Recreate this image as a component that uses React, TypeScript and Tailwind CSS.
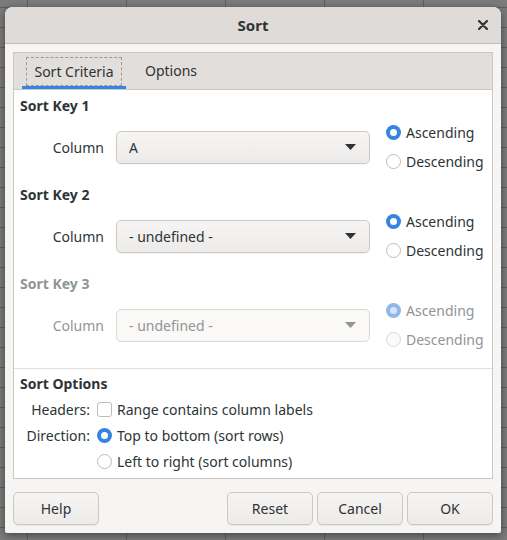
import React from 'react';

const ink = 'text-[#2e3436]';

function Radio({ checked, disabled }: { checked?: boolean; disabled?: boolean }) {
  if (checked) {
    return (
      <span
        className={`w-[15px] h-[15px] rounded-full shrink-0 flex items-center justify-center ${
          disabled ? 'bg-[#8fb7ec]' : 'bg-[#3584e4]'
        }`}
      >
        <span className={`w-[7px] h-[7px] rounded-full ${disabled ? 'bg-[#d6e5f8]' : 'bg-white'}`} />
      </span>
    );
  }
  return (
    <span
      className={`block w-[15px] h-[15px] rounded-full shrink-0 border ${
        disabled ? 'border-[#dcd8d4] bg-[#fbfafa]' : 'border-[#c0bbb6] bg-white'
      }`}
    />
  );
}

function Combo({ value, disabled }: { value: string; disabled?: boolean }) {
  return (
    <div
      className={`w-[254px] h-[33px] rounded-[5px] border flex items-center pl-[12px] pr-[12px] ${
        disabled
          ? 'border-[#dcd8d4] bg-[#faf9f8] text-[#929595]'
          : `border-[#cdc7c2] bg-gradient-to-b from-[#f6f5f4] to-[#edebe9] ${ink} shadow-[0_1px_0_rgba(0,0,0,0.04)]`
      }`}
    >
      <span className="flex-1">{value}</span>
      <svg width="11" height="6" viewBox="0 0 11 6" className="mr-[1px]">
        <path d="M0 0 H11 L5.5 6 Z" fill={disabled ? '#929595' : '#2e3436'} />
      </svg>
    </div>
  );
}

function SortKey({ n, value, disabled }: { n: number; value: string; disabled?: boolean }) {
  const tone = disabled ? 'text-[#929595]' : ink;
  return (
    <div className="flex flex-col">
      <div className={`h-[18px] leading-[18px] pl-[6px] font-bold ${tone}`}>Sort Key {n}</div>
      <div className="mt-[3px] h-[58px] flex items-center">
        <div className={`w-[90px] text-right ${tone}`}>Column</div>
        <div className="ml-[12px]">
          <Combo value={value} disabled={disabled} />
        </div>
        <div className="ml-[16px] flex flex-col">
          <div className="h-[29px] flex items-center gap-[5px]">
            <Radio checked disabled={disabled} />
            <span className={tone}>Ascending</span>
          </div>
          <div className="h-[29px] flex items-center gap-[5px]">
            <Radio disabled={disabled} />
            <span className={tone}>Descending</span>
          </div>
        </div>
      </div>
    </div>
  );
}

function Button({ label, className = '' }: { label: string; className?: string }) {
  return (
    <div
      className={`h-[33px] w-[86px] rounded-[5px] border border-[#cdc7c2] bg-gradient-to-b from-[#f6f5f4] to-[#edebe9] flex items-center justify-center ${ink} shadow-[0_1px_0_rgba(0,0,0,0.05)] ${className}`}
    >
      {label}
    </div>
  );
}

export default function App() {
  return (
    <div
      className="w-[507px] h-[540px] overflow-hidden bg-[#7b7b7b] pl-[5px] pt-[7px] bg-[linear-gradient(to_right,#5f5f5f_1px,transparent_1px),linear-gradient(to_bottom,#5f5f5f_1px,transparent_1px)] bg-[size:99px_20px] bg-[position:27px_7px]"
      style={{ fontFamily: '"Noto Sans", "Open Sans", sans-serif', fontSize: '14px' }}
    >
      <div className="w-[496px] h-[526px] rounded-t-[8px] rounded-b-[2px] bg-[#f6f5f4] shadow-[0_2px_8px_rgba(0,0,0,0.45)] flex flex-col overflow-hidden">
        {/* title bar */}
        <div className="h-[37px] shrink-0 bg-[#dedbd8] border-b border-[#c0bdb9] flex items-center relative">
          <div className={`flex-1 text-center font-bold text-[15px] ${ink}`}>Sort</div>
          <svg width="10" height="10" viewBox="0 0 10 10" className="absolute right-[13px] top-[13px]">
            <path d="M1 1 L9 9 M9 1 L1 9" stroke="#2e3436" strokeWidth="2.2" strokeLinecap="round" />
          </svg>
        </div>

        {/* notebook */}
        <div className="mx-[8px] mt-[8px] h-[427px] border border-[#cdc7c2] flex flex-col bg-white">
          <div className="h-[37px] shrink-0 bg-[#e1dedb] border-b border-[#cdc7c2] flex items-end pl-[8px] gap-[8px]">
            <div className="w-[104px] h-[36px] flex flex-col items-center">
              <div className="mt-[4px] w-[96px] h-[29px] border border-dashed border-[#9c9a97] flex items-center justify-center">
                <span className={ink}>Sort Criteria</span>
              </div>
              <div className="mt-auto w-full h-[3px] bg-[#3584e4]" />
            </div>
            <div className="w-[74px] h-[36px] flex items-center justify-center pb-[2px]">
              <span className={ink}>Options</span>
            </div>
          </div>

          <div className="flex-1 flex flex-col pt-[7px]">
            <SortKey n={1} value="A" />
            <div className="h-[10px]" />
            <SortKey n={2} value="- undefined -" />
            <div className="h-[10px]" />
            <SortKey n={3} value="- undefined -" disabled />

            <div className="mt-[14px] h-px bg-[#e3e0dd]" />

            <div className={`mt-[6px] h-[18px] leading-[18px] pl-[6px] font-bold ${ink}`}>Sort Options</div>
            <div className="mt-[3px] flex flex-col">
              <div className="h-[26px] flex items-center">
                <div className={`w-[76px] text-right ${ink}`}>Headers:</div>
                <span className="block ml-[7px] w-[15px] h-[15px] rounded-[3px] border border-[#c0bbb6] bg-white" />
                <span className={`ml-[5px] ${ink}`}>Range contains column labels</span>
              </div>
              <div className="h-[26px] flex items-center">
                <div className={`w-[76px] text-right ${ink}`}>Direction:</div>
                <span className="ml-[7px]">
                  <Radio checked />
                </span>
                <span className={`ml-[5px] ${ink}`}>Top to bottom (sort rows)</span>
              </div>
              <div className="h-[26px] flex items-center">
                <div className="w-[76px]" />
                <span className="ml-[7px]">
                  <Radio />
                </span>
                <span className={`ml-[5px] ${ink}`}>Left to right (sort columns)</span>
              </div>
            </div>
          </div>
        </div>

        {/* buttons */}
        <div className="mt-[13px] mx-[8px] flex">
          <Button label="Help" />
          <div className="flex-1" />
          <div className="flex gap-[4px]">
            <Button label="Reset" />
            <Button label="Cancel" />
            <Button label="OK" />
          </div>
        </div>
      </div>
    </div>
  );
}
